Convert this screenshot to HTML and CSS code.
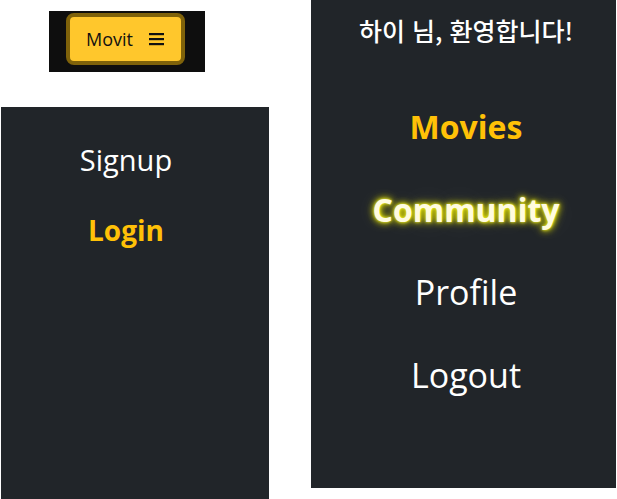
FILE: index.html
```html
<!DOCTYPE html>
<html lang="ko">
<head>
<meta charset="utf-8">
<title>Movit</title>
<link rel="stylesheet" href="styles.css">
</head>
<body>
<div class="canvas">
  <div class="left-col">
    <div class="topbar">
      <button class="brand-btn">
        <span class="brand">Movit</span>
        <svg class="burger" width="16" height="14" viewBox="0 0 16 14"><rect x="0" y="1" width="15" height="2.2" fill="#111"/><rect x="0" y="6" width="15" height="2.2" fill="#111"/><rect x="0" y="11" width="15" height="2.2" fill="#111"/></svg>
      </button>
    </div>
    <nav class="panel guest">
      <a class="item">Signup</a>
      <a class="item active">Login</a>
    </nav>
  </div>
  <nav class="panel member">
    <div class="greet">하이 님, 환영합니다!</div>
    <ul class="menu">
      <li class="item active">Movies</li>
      <li class="item glow">Community</li>
      <li class="item">Profile</li>
      <li class="item">Logout</li>
    </ul>
  </nav>
</div>
</body>
</html>
```
FILE: styles.css
```css
* { box-sizing: border-box; }
html, body { margin: 0; padding: 0; background: #fff; }
body { font-family: "Open Sans", "Noto Sans", "Noto Sans CJK KR", sans-serif; }
.canvas { display: flex; width: 617px; height: 499px; }
.left-col { display: flex; flex-direction: column; width: 311px; }
.topbar {
  margin: 11px 0 0 49px;
  width: 156px; height: 61px;
  background: #0e0e0e;
  padding: 2px 0 0 17px;
}
.brand-btn {
  display: flex; align-items: center; justify-content: space-between;
  width: 119px; height: 52px;
  background: #ffc72c;
  border: 4px solid #7f620a;
  border-radius: 8px;
  padding: 0 16px 0 16px;
  font-family: "Open Sans", sans-serif;
  font-size: 18px; color: #111;
}
.brand { margin-top: -1px; }
.burger { display: block; }
.panel { background: #212529; color: #fff; }
.guest {
  margin: 35px 0 0 1px;
  width: 268px; flex: 1;
  display: flex; flex-direction: column; align-items: center;
  padding: 18px 18px 0 0;
}
.guest .item { font-size: 29px; line-height: 70px; }
.guest .item.active { font-size: 28px; }
.item.active { color: #ffc107; font-weight: 700; }
.member {
  width: 305px; height: 488px;
  display: flex; flex-direction: column; align-items: center;
  padding-left: 5px;
}
.greet {
  font-family: "Noto Sans CJK KR", sans-serif;
  font-size: 25px; line-height: 34px; margin-top: 13px;
  font-weight: 500;
}
.menu { list-style: none; margin: 38px 0 0 0; padding: 0; display: flex; flex-direction: column; align-items: center; }
.menu .item { font-size: 34px; line-height: 83px; }
.menu .item.active { font-size: 32px; }
.item.glow {
  font-weight: 700; font-size: 32px;
  color: #fffbe0;
  text-shadow: 0 0 3px #ffff30, 0 0 6px #e6e600, 0 0 10px #b8b800, 0 0 30px rgba(255,255,255,0.15), 0 0 50px rgba(255,255,255,0.1);
}
```
